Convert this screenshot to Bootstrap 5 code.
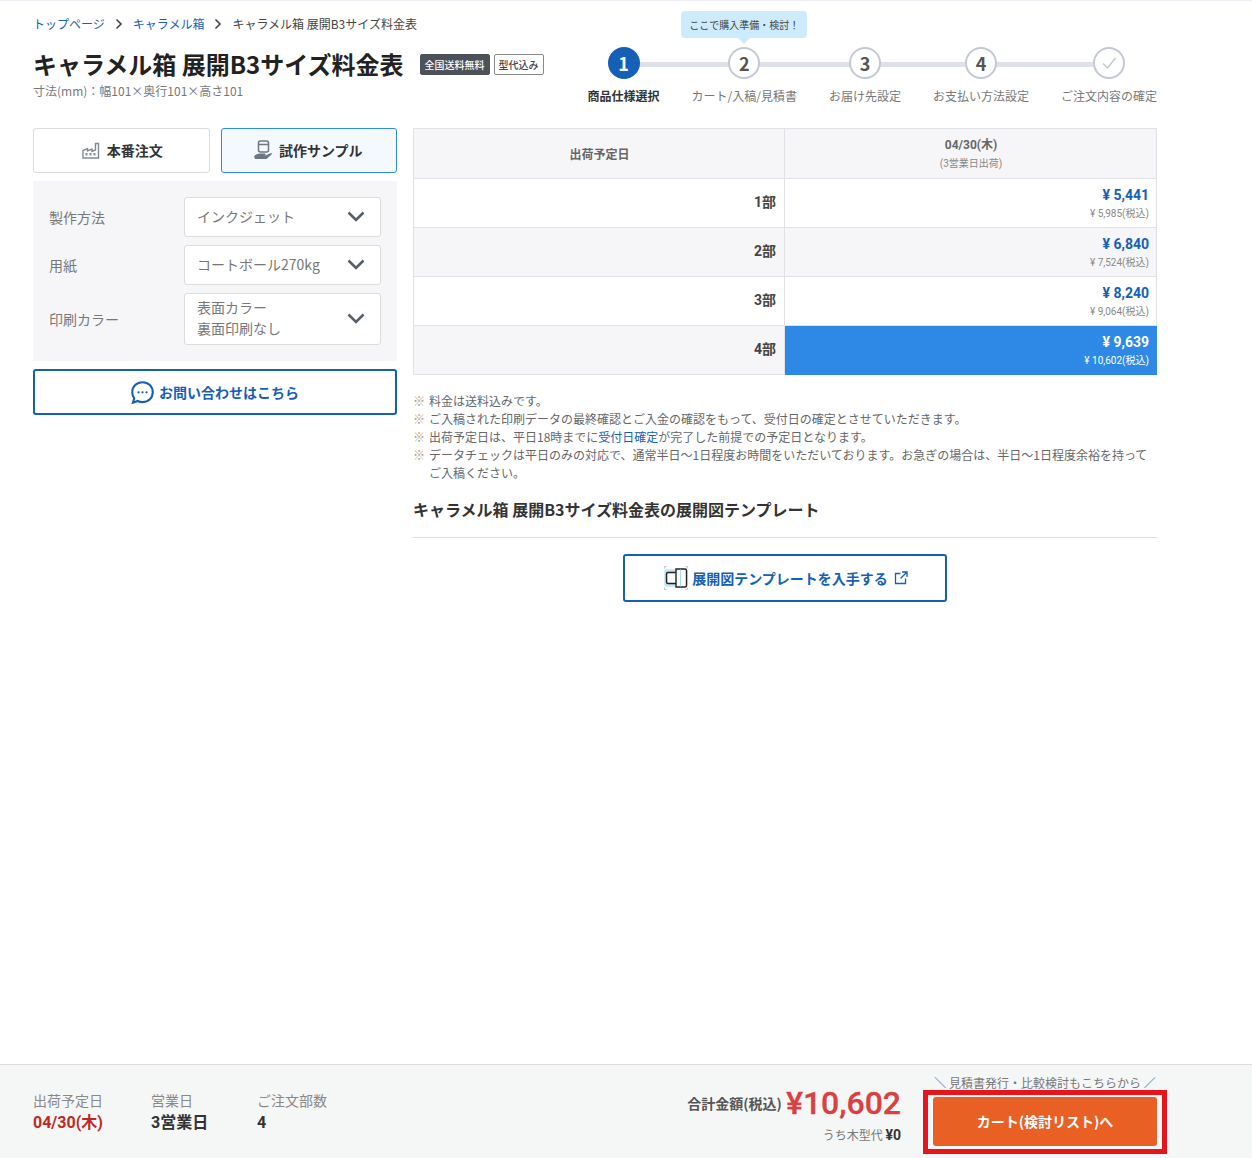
<!DOCTYPE html>
<html lang="ja">
<head>
    <meta charset="UTF-8">
    <title>キャラメル箱 展開B3サイズ料金表</title>
    <link href="https://cdn.jsdelivr.net/npm/bootstrap@5.3.2/dist/css/bootstrap.min.css" rel="stylesheet">
    <style>
        body { font-family: "Noto Sans CJK JP", "Noto Sans", sans-serif; color: #333; background: #fff; border-top: 1px solid #eceef3; font-size: 14px; min-height: 1158px; }
        a { color: #1560b7; text-decoration: none; }
        .page-wrap { width: 1124px; margin-left: 33px; }

        .crumbs { font-size: 12px; height: 16px; line-height: 16px; margin-top: 15px; gap: 10px; color: #444; }
        .head-row { height: 96px; }
        .title-block { padding-top: 14px; }
        .page-title { font-size: 24px; font-weight: 700; line-height: 36px; color: #222; margin: 0; }
        .size-note { font-size: 12px; line-height: 16px; color: #777; margin-top: 1px; }
        .tag-dark, .tag-line { font-size: 10px; font-weight: 500; line-height: 19px; height: 21px; padding: 0 4px; border-radius: 2px; border: 1px solid #4d5259; }
        .tag-dark { background: #4d5259; color: #fff; }
        .tag-line { background: #fff; color: #444; border-color: #888; }

        .stepper { gap: 32px; padding-top: 15px; }
        .stepper::before { content: ""; position: absolute; top: 30px; left: 36px; right: 48px; height: 5px; background: #dfe1e8; }
        .step-item { position: relative; display: flex; flex-direction: column; align-items: center; font-size: 12px; line-height: 16px; color: #777; }
        .step-dot { width: 32px; height: 32px; border-radius: 50%; border: 2px solid #c3c8d4; background: #fff; color: #555; font-weight: 700; font-size: 18px; line-height: 1; display: flex; align-items: center; justify-content: center; margin-bottom: 9px; }
        .step-item.is-on { color: #333; font-weight: 700; }
        .step-item.is-on .step-dot { background: #1560b7; border-color: #1560b7; color: #fff; }
        .step-tip { position: absolute; top: -36px; left: 50%; transform: translateX(-50%); background: #cdebfc; color: #444; font-size: 10px; line-height: 27px; height: 27px; width: 126px; text-align: center; border-radius: 4px; font-weight: 400; white-space: nowrap; }
        .step-tip::after { content: ""; position: absolute; left: 50%; bottom: -6px; margin-left: -6px; border: 6px solid transparent; border-bottom: 0; border-top-color: #cdebfc; }

        .side-col { width: 364px; flex: none; }
        .main-col { width: 744px; flex: none; margin-left: 16px; }
        .type-row { column-gap: 11px; }
        .type-btn { flex: 1; height: 45px; background: #fff; border: 1px solid #dcdcdc; border-radius: 3px; font-weight: 700; font-size: 14px; color: #333; gap: 7px; padding: 0 0 1px 2px; }
        .type-btn.is-on { background: #f3f9ff; border-color: #2f8ae6; gap: 6px; padding: 0 2px 1px 0; }
        .spec-box { background: #f6f6f8; margin-top: 8px; padding: 16px; height: 180px; }
        .spec-row { margin-bottom: 8px; }
        .spec-label { width: 135px; color: #777; flex: none; }
        .spec-select { flex: 1; min-height: 40px; background: #fff; border: 1px solid #dcdcdc; border-radius: 3px; padding: 0 15px 1px 12px; color: #777; line-height: 21px; }
        .spec-select.is-tall { height: 52px; padding-bottom: 2px; }
        .ask-btn { height: 46px; margin-top: 8px; border: 2px solid #1560b7; border-radius: 3px; background: #fff; color: #1560b7; font-weight: 700; gap: 5px; }

        .price-tbl { width: 744px; table-layout: fixed; border-collapse: collapse; font-family: Roboto, "Noto Sans CJK JP", sans-serif; margin: 0; }
        .price-col-a { width: 371px; }
        .price-tbl td, .price-tbl th { border: 1px solid #e1e2e8; padding: 0 7px 0 8px; height: 49px; }
        .price-tbl .head-cell { background: #f6f6f8; text-align: center; font-size: 12px; font-weight: 700; color: #666; height: 50px; }
        .price-tbl .head-cell.is-first { padding-top: 3px; }
        .price-tbl .head-sub { font-size: 10px; font-weight: 400; color: #888; line-height: 14px; margin-top: 4px; }
        .price-tbl .head-date { line-height: 16px; }
        .price-tbl .qty-cell { text-align: right; font-weight: 700; font-size: 14px; color: #444; padding-bottom: 2px; padding-right: 8px; }
        .price-tbl .is-grey { background: #f6f6f8; }
        .price-tbl .cost-cell { text-align: right; }
        .cost-main { font-size: 14px; font-weight: 700; color: #1560b7; line-height: 18px; }
        .cost-tax { font-size: 10px; color: #888; line-height: 14px; margin-top: 3px; }
        .price-tbl .cost-cell.is-picked { background: #2d89e5; border-color: #2d89e5; }
        .is-picked .cost-main, .is-picked .cost-tax { color: #fff; }

        .notes { list-style: none; margin: 17px 0 0; padding: 0; font-size: 12px; line-height: 18px; color: #666; }
        .notes li { padding-left: 16px; position: relative; }
        .notes li::before { content: "※"; position: absolute; left: 0; color: #a98; }
        .tpl-title { font-size: 16px; font-weight: 700; line-height: 24px; color: #333; margin: 15px 0 16px; }
        .tpl-line { border-top: 1px solid #ddd; }
        .tpl-btn { width: 324px; height: 48px; margin: 16px auto 0; border: 2px solid #1560b7; border-radius: 3px; color: #1560b7; font-weight: 700; font-size: 14px; gap: 4px; background: #fff; padding-left: 2px; }
        .tpl-ext { margin-left: 2px; }

        .foot-bar { position: relative; height: 94px; background: #f5f6f6; border-top: 1px solid #dcdcdc; padding-left: 33px; margin-top: auto; }
        .foot-info { margin-top: 25px; line-height: 20px; color: #888; }
        .foot-date { width: 118px; }
        .foot-days { width: 106px; }
        .foot-val { font-family: Roboto, "Noto Sans CJK JP", sans-serif; font-weight: 700; font-size: 16px; color: #333; margin-top: 3px; }
        .foot-val.is-red { color: #bb2a22; }
        .total-wrap { position: absolute; right: 351px; top: 18px; text-align: right; }
        .total-label { font-size: 14px; font-weight: 700; color: #555; }
        .total-num { font-family: Roboto, sans-serif; font-size: 32px; font-weight: 500; color: #d9403f; line-height: 40px; margin-left: 4px; -webkit-text-stroke: .3px #d9403f; }
        .total-sub { font-size: 12px; color: #777; line-height: 16px; margin-top: 4px; }
        .total-sub b { color: #333; font-family: Roboto, sans-serif; font-size: 14px; }
        .cart-hint { position: absolute; left: 934px; top: 10px; width: 222px; text-align: center; font-size: 12px; line-height: 16px; color: #777; white-space: nowrap; }
        .cart-mark { position: absolute; left: 923px; top: 25px; width: 244px; height: 64px; border: 5px solid #e8141c; padding: 2px 5px; }
        .cart-btn { width: 100%; height: 49px; border: 0; border-radius: 3px; background: #e96024; color: #fff; font-weight: 700; font-size: 14px; padding: 0; }
    </style>
</head>
<body class="d-flex flex-column">
<div class="page-wrap">
    <!-- Breadcrumb -->
    <div class="crumbs d-flex align-items-center">
        <a href="#">トップページ</a>
        <svg width="8" height="12" viewBox="0 0 8 12"><path d="M1.500 1.500 6 6l-4.500 4.500" fill="none" stroke="#444" stroke-width="1.600"/></svg>
        <a href="#">キャラメル箱</a>
        <svg width="8" height="12" viewBox="0 0 8 12"><path d="M1.500 1.500 6 6l-4.500 4.500" fill="none" stroke="#444" stroke-width="1.600"/></svg>
        <span>キャラメル箱 展開B3サイズ料金表</span>
    </div>

    <!-- Title and steps -->
    <div class="head-row d-flex justify-content-between">
        <div class="title-block">
            <div class="d-flex align-items-center">
                <h1 class="page-title">キャラメル箱 展開B3サイズ料金表</h1>
                <span class="tag-dark ms-3">全国送料無料</span>
                <span class="tag-line ms-1">型代込み</span>
            </div>
            <div class="size-note">寸法(mm)：幅101×奥行101×高さ101</div>
        </div>
        <div class="stepper position-relative d-flex align-items-start">
            <div class="step-item is-on"><span class="step-dot">1</span>商品仕様選択</div>
            <div class="step-item"><span class="step-tip">ここで購入準備・検討！</span><span class="step-dot">2</span>カート/入稿/見積書</div>
            <div class="step-item"><span class="step-dot">3</span>お届け先設定</div>
            <div class="step-item"><span class="step-dot">4</span>お支払い方法設定</div>
            <div class="step-item"><span class="step-dot"><svg width="18" height="18" viewBox="0 0 18 18"><path d="M3 9.500 7.500 14 15.500 4" fill="none" stroke="#c3c8d4" stroke-width="1.500"/></svg></span>ご注文内容の確定</div>
        </div>
    </div>

    <div class="d-flex align-items-start">
        <!-- Left column -->
        <div class="side-col">
            <div class="type-row d-flex">
                <button class="type-btn d-flex align-items-center justify-content-center">
                    <svg width="18" height="17" viewBox="0 0 18 17"><path d="M1 16V8.500l4.500-2v2.500l4.500-2v2.500l3.500-1.500V1.500h3V16z" fill="none" stroke="#808a96" stroke-width="1.400"/><path d="M3.500 11h2v2.500h-2zM7.500 11h2v2.500h-2zM11.500 11h2v2.500h-2z" fill="#808a96"/></svg>
                    本番注文
                </button>
                <button class="type-btn is-on d-flex align-items-center justify-content-center">
                    <svg width="20" height="20" viewBox="0 0 20 20"><rect x="5.500" y="1" width="10" height="11" rx="2" fill="none" stroke="#6c7785" stroke-width="1.500"/><path d="M5.500 4.500h10" stroke="#6c7785" stroke-width="1.500"/><path d="M1 16.500c1.500-2 3.500-3 6-3h4.500c1.500 0 1.500 2 0 2H9h3.500l5.500-2.500c1 0 1.200 1 .3 1.800L13.500 19H2z" fill="#6c7785"/></svg>
                    試作サンプル
                </button>
            </div>
            <div class="spec-box">
                <div class="spec-row d-flex align-items-center">
                    <div class="spec-label">製作方法</div>
                    <div class="spec-select d-flex align-items-center justify-content-between"><span>インクジェット</span>
                        <svg width="18" height="11" viewBox="0 0 18 11"><path d="M1.500 1.500 9 9l7.500-7.500" fill="none" stroke="#55606c" stroke-width="2.600"/></svg></div>
                </div>
                <div class="spec-row d-flex align-items-center">
                    <div class="spec-label">用紙</div>
                    <div class="spec-select d-flex align-items-center justify-content-between"><span>コートボール270kg</span>
                        <svg width="18" height="11" viewBox="0 0 18 11"><path d="M1.500 1.500 9 9l7.500-7.500" fill="none" stroke="#55606c" stroke-width="2.600"/></svg></div>
                </div>
                <div class="spec-row d-flex align-items-center">
                    <div class="spec-label">印刷カラー</div>
                    <div class="spec-select is-tall d-flex align-items-center justify-content-between"><span>表面カラー<br>裏面印刷なし</span>
                        <svg width="18" height="11" viewBox="0 0 18 11"><path d="M1.500 1.500 9 9l7.500-7.500" fill="none" stroke="#55606c" stroke-width="2.600"/></svg></div>
                </div>
            </div>
            <div class="ask-btn d-flex align-items-center justify-content-center">
                <svg width="23" height="23" viewBox="0 0 22 22"><path d="M11 1.200c5.600 0 9.800 4.100 9.800 9.500S16.600 20.200 11 20.200c-1.800 0-3.300-.4-4.600-1.100l-4.600 1.700 1.300-4.200c-1.200-1.600-1.900-3.600-1.900-5.900 0-5.400 4.200-9.500 9.800-9.500z" fill="none" stroke="#1560b7" stroke-width="2"/><circle cx="7.200" cy="10.800" r="1.100" fill="#1560b7"/><circle cx="11" cy="10.800" r="1.100" fill="#1560b7"/><circle cx="14.800" cy="10.800" r="1.100" fill="#1560b7"/></svg>
                お問い合わせはこちら
            </div>
        </div>

        <!-- Right column -->
        <div class="main-col">
            <table class="price-tbl">
                <colgroup><col class="price-col-a"><col></colgroup>
                <tr>
                    <td class="head-cell is-first">出荷予定日</td>
                    <td class="head-cell"><div class="head-date">04/30(木)</div><div class="head-sub">(3営業日出荷)</div></td>
                </tr>
                <tr>
                    <td class="qty-cell">1部</td>
                    <td class="cost-cell"><div class="cost-main">¥ 5,441</div><div class="cost-tax">¥ 5,985(税込)</div></td>
                </tr>
                <tr>
                    <td class="qty-cell is-grey">2部</td>
                    <td class="cost-cell is-grey"><div class="cost-main">¥ 6,840</div><div class="cost-tax">¥ 7,524(税込)</div></td>
                </tr>
                <tr>
                    <td class="qty-cell">3部</td>
                    <td class="cost-cell"><div class="cost-main">¥ 8,240</div><div class="cost-tax">¥ 9,064(税込)</div></td>
                </tr>
                <tr>
                    <td class="qty-cell is-grey">4部</td>
                    <td class="cost-cell is-picked"><div class="cost-main">¥ 9,639</div><div class="cost-tax">¥ 10,602(税込)</div></td>
                </tr>
            </table>
            <ul class="notes">
                <li>料金は送料込みです。</li>
                <li>ご入稿された印刷データの最終確認とご入金の確認をもって、受付日の確定とさせていただきます。</li>
                <li>出荷予定日は、平日18時までに<a href="#">受付日確定</a>が完了した前提での予定日となります。</li>
                <li>データチェックは平日のみの対応で、通常半日〜1日程度お時間をいただいております。お急ぎの場合は、半日〜1日程度余裕を持ってご入稿ください。</li>
            </ul>
            <div class="tpl-title">キャラメル箱 展開B3サイズ料金表の展開図テンプレート</div>
            <div class="tpl-line"></div>
            <div class="tpl-btn d-flex align-items-center justify-content-center">
                <svg width="24" height="24" viewBox="0 0 24 24"><path d="M.5 2.500v-2h2M21.500.5h2v2M23.500 21.500v2h-2M2.500 23.500h-2v-2" fill="none" stroke="#b9bec5" stroke-width=".9"/><path d="M2 5h20v14H2z" fill="none" stroke="#bfe5f7" stroke-width="3.500" stroke-linejoin="round"/><path d="M12 3h9a1.500 1.500 0 0 1 1.500 1.500v15A1.500 1.500 0 0 1 21 21h-9z" fill="#fff"/><path d="M12 6.500H4A1.500 1.500 0 0 0 2.500 8v8A1.500 1.500 0 0 0 4 17.500h8M12 3h9a1.500 1.500 0 0 1 1.500 1.500v15A1.500 1.500 0 0 1 21 21h-9z" fill="none" stroke="#222" stroke-width="1.400"/><path d="M16.500 3.500v17" stroke="#a9daf3"/></svg>
                展開図テンプレートを入手する
                <svg class="tpl-ext" width="14" height="14" viewBox="0 0 14 14"><path d="M6.500 2.500H1.500v10h10V7.500M8 1h5v5M13 1 6.500 7.500" fill="none" stroke="#1560b7" stroke-width="1.300"/></svg>
            </div>
        </div>
    </div>
</div>

<!-- Bottom bar -->
<div class="foot-bar">
    <div class="foot-info d-flex">
        <div class="foot-date"><div>出荷予定日</div><div class="foot-val is-red">04/30(木)</div></div>
        <div class="foot-days"><div>営業日</div><div class="foot-val">3営業日</div></div>
        <div><div>ご注文部数</div><div class="foot-val">4</div></div>
    </div>
    <div class="total-wrap">
        <div class="d-flex align-items-center justify-content-end"><span class="total-label">合計金額(税込)</span><span class="total-num">¥10,602</span></div>
        <div class="total-sub">うち木型代 <b>¥0</b></div>
    </div>
    <div class="cart-hint">＼ 見積書発行・比較検討もこちらから ／</div>
    <div class="cart-mark"><button class="cart-btn">カート(検討リスト)へ</button></div>
</div>
<script src="https://cdn.jsdelivr.net/npm/bootstrap@5.3.2/dist/js/bootstrap.bundle.min.js"></script>
</body>
</html>
